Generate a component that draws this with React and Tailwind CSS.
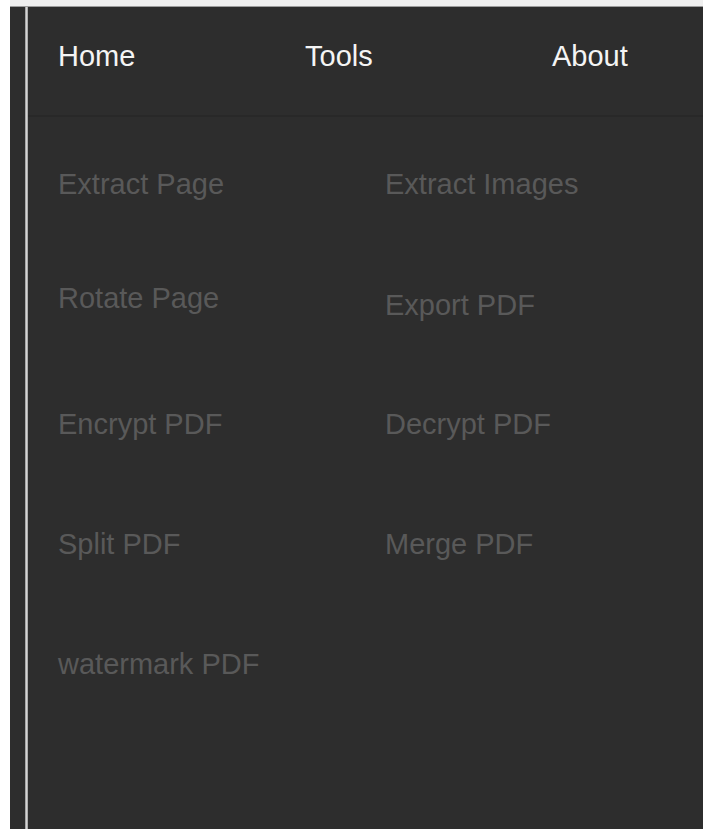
import React from 'react';

const navLinks = ['Home', 'Tools', 'About'];

/* tool list, two per row */
const tools = [
    { label: 'Extract Page' },
    { label: 'Extract Images' },
    { label: 'Rotate Page', shift: '-mt-[6px]' },
    { label: 'Export PDF', shift: 'mt-[1px]' },
    { label: 'Encrypt PDF' },
    { label: 'Decrypt PDF' },
    { label: 'Split PDF' },
    { label: 'Merge PDF' },
    { label: 'watermark PDF' },
];

const App = () => {
    return (
        <div className="flex h-[829px] bg-white overflow-hidden font-['Liberation_Sans',Arial,sans-serif]">
            <div className="w-[10px] shrink-0" />

            <div className="flex-1 min-w-0 flex flex-col">
                {/* top strip */}
                <div className="h-[7px] bg-[#efefef] border-b border-[#9c9c9c]" />

                <div className="flex-1 flex bg-[#2d2d2d]">
                    <div className="w-[15px] shrink-0" />
                    {/* divider rail */}
                    <div className="w-[3px] shrink-0 bg-gradient-to-r from-[#8f8f8f] via-[#d4d4d4] to-[#9a9a9a]" />

                    <div className="flex-1 min-w-0 flex flex-col">
                        {/* header nav */}
                        <nav className="h-[110px] pt-[35px] pl-[30px] grid grid-cols-[247px_247px_1fr] border-b-2 border-[#282828]">
                            {navLinks.map(link => (
                                <a key={link} className="text-[29px] leading-none text-[#f4f4f4]">
                                    {link}
                                </a>
                            ))}
                        </nav>

                        {/* tools grid */}
                        <div className="pt-[53px] pl-[30px] grid grid-cols-[327px_1fr]">
                            {tools.map(t => (
                                <div key={t.label} className="h-[120px]">
                                    <a className={`block text-[29px] leading-none text-[#595959] ${t.shift || ''}`}>
                                        {t.label}
                                    </a>
                                </div>
                            ))}
                        </div>
                    </div>
                </div>
            </div>
        </div>
    );
};

export default App;
